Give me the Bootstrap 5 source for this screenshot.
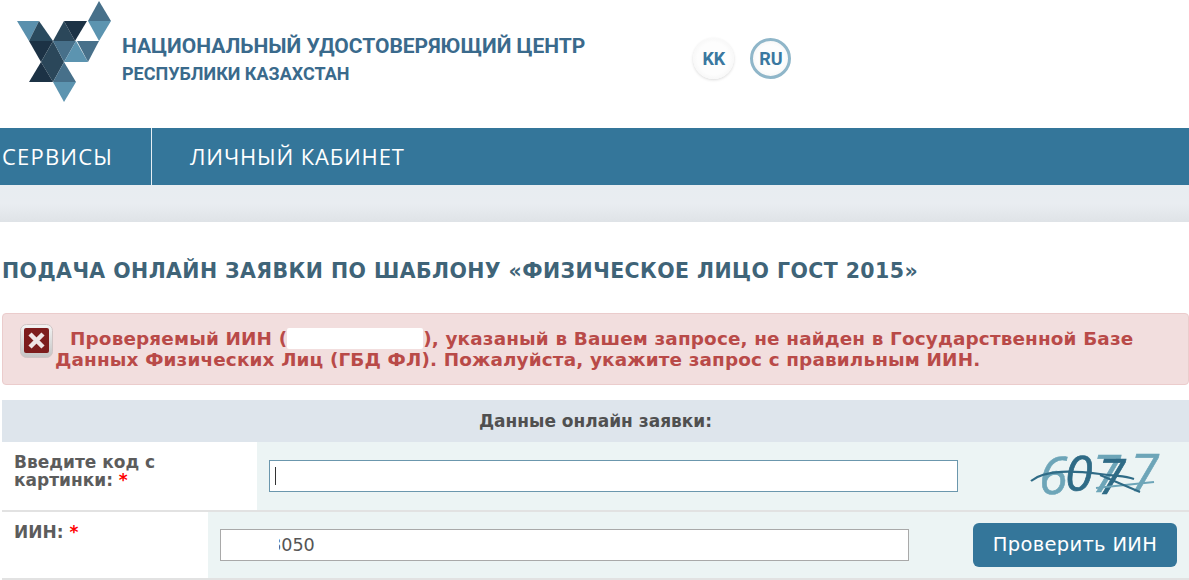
<!DOCTYPE html>
<html lang="ru"><head><meta charset="utf-8">
<link rel="stylesheet" href="https://cdn.jsdelivr.net/npm/bootstrap@5.3.0/dist/css/bootstrap.min.css">
<style>
body{font-family:"DejaVu Sans",sans-serif;background:#fff;overflow:hidden;width:1189px;height:580px}
.hdr{height:128px}
.logo-box{width:122px;height:128px;flex:none}
.brand1{font:700 21px/25px Roboto,sans-serif;color:#3a6a8c;margin-top:34px;white-space:nowrap}
.brand2{font:700 18px/22px Roboto,sans-serif;color:#3a6a8c;margin-top:4px;white-space:nowrap}
.langs{margin-left:108px;margin-top:38px;gap:16px}
.lng{width:41px;height:41px;border-radius:50%;background:radial-gradient(#fdfdfd 55%,#eee);font:700 18px/41px Roboto,sans-serif;color:#3a78a0;text-align:center;box-shadow:0 1px 3px rgba(0,0,0,.15)}
.lng-on{border:3px solid #8fb6c9;line-height:35px;box-shadow:none}
.mainnav{height:57px;background:#34769a}
.mainnav a{font:400 22px/57px "Open Sans",sans-serif;color:#fff;text-decoration:none;white-space:nowrap}
.nav-a{width:152px;padding-left:2px;border-right:1px solid #e6eff4;letter-spacing:1.2px}
.nav-b{padding-left:38px;letter-spacing:.85px}
.band{height:37px;background:linear-gradient(#e8edf1,#e9edf1 50%,#dfe3e7)}
.ttl{font:700 20.5px/24px "DejaVu Sans",sans-serif;color:#3f6478;margin:37px 0 30px 2px;white-space:nowrap;letter-spacing:.42px}
.errbox{margin-left:2px;height:72px;background:#f2dede;border:1px solid #ebcccc;border-radius:4px;color:#b94a48;font:700 18.4px/21px "DejaVu Sans",sans-serif;letter-spacing:.15px;padding:14px 0 0 52px;white-space:nowrap;position:relative}
.errico{position:absolute;left:17px;top:10px}
.hide{display:inline-block;width:136px;height:21px;background:#fff;vertical-align:top;border-radius:2px}
.first{padding-left:15px}
.formhead{margin:15px 0 0 2px;height:42px;background:#dee5ec;text-align:center;font:700 17px/42px "DejaVu Sans",sans-serif;color:#505050}
.frow{margin-left:2px;border-bottom:2px solid #e2e2e2}
.r1{height:70px}.r2{height:68px}
.lbl{font:700 17px/18px "DejaVu Sans",sans-serif;color:#5c5c5c;padding:11px 40px 0 12px}
.l1{width:255px;flex:none}.l2{width:206px;flex:none}
.fld{background:#ecf4f4;padding:0 0 0 12px;flex:1}
.inp1,.inp2{display:block;height:32px;background:#fff;padding:0 5px;flex:none}
.inp1{width:689px;margin-top:18px;border:1px solid #6b97ad}
.cur{display:block;width:1px;height:18px;background:#333;margin-top:6px}
.inp2{width:689px;margin-top:17px;border:1px solid #a9a9a9;font:400 17.6px/30px "DejaVu Sans",sans-serif;color:#555;padding-left:49px;position:relative}
.mask{position:absolute;left:0;top:0;width:58px;height:30px;background:#fff}
.capt{margin-left:72px;margin-top:9px;flex:none;overflow:visible}
.digl{font:italic 400 52px "Open Sans",sans-serif;fill:#6da5b8;stroke:#6da5b8;stroke-width:.6}
.digd{font:italic 400 50px "Open Sans",sans-serif;fill:#2f6b86;stroke:#2f6b86;stroke-width:.7}
.go{width:204px;height:44px;margin:11px 0 0 64px;background:#34769a;color:#fff;font:400 19.5px/44px "DejaVu Sans",sans-serif;letter-spacing:.3px;border-radius:6px;border:0;padding:0;text-align:center;white-space:nowrap;flex:none}
.go:hover{background:#34769a;color:#fff}
.req{color:#f00}
</style></head><body>
<div class="hdr d-flex">
<div class="logo-box"><svg width="122" height="128" viewBox="0 0 122 128">
<polygon points="17,21 39,21 29,41" fill="#5a90ad"/><polygon points="39,21 53,41 29,41" fill="#2a4a5e"/><polygon points="29,41 53,41 41,62" fill="#1c3245"/><polygon points="53,41 41,62 64,62" fill="#2b475a"/>
<polygon points="53,41 64,21 75,41" fill="#2b475a"/><polygon points="64,21 87,21 75,41" fill="#1c3245"/><polygon points="53,41 76,41 64,62" fill="#47708a"/><polygon points="64,62 76,41 88,62" fill="#5c94b0"/><polygon points="77,41 99,41 88,62" fill="#47708a"/>
<polygon points="88,21 111,21 99,41" fill="#5c94b0"/><polygon points="88,21 99,1 111,21" fill="#47708a"/>
<polygon points="41,62 64,62 53,82" fill="#2b475a"/><polygon points="41,62 53,82 29,82" fill="#1c3245"/><polygon points="64,62 53,82 76,82" fill="#47708a"/><polygon points="53,82 76,82 64,102" fill="#5c94b0"/>
</svg></div>
<div><div class="brand1">НАЦИОНАЛЬНЫЙ УДОСТОВЕРЯЮЩИЙ ЦЕНТР</div><div class="brand2">РЕСПУБЛИКИ КАЗАХСТАН</div></div>
<div class="langs d-flex align-items-start"><div class="lng">KK</div><div class="lng lng-on">RU</div></div>
</div>
<div class="mainnav d-flex"><a class="nav-a" href="#">СЕРВИСЫ</a><a class="nav-b" href="#">ЛИЧНЫЙ КАБИНЕТ</a></div>
<div class="band"></div>
<h1 class="ttl">ПОДАЧА ОНЛАЙН ЗАЯВКИ ПО ШАБЛОНУ «ФИЗИЧЕСКОЕ ЛИЦО ГОСТ 2015»</h1>
<div class="errbox">
<svg class="errico" width="33" height="34" viewBox="0 0 33 34"><defs><linearGradient id="sil" x1="0" y1="0" x2="0" y2="1"><stop offset="0" stop-color="#f4f4f4"/><stop offset="1" stop-color="#c4c4c4"/></linearGradient></defs><rect x=".5" y=".5" width="32" height="33" rx="6" fill="url(#sil)" stroke="#d0c4c4"/><rect x="4" y="4" width="25" height="25" rx="2" fill="#7d1d1d"/><path d="M10 10L23 23M23 10L10 23" stroke="#efe4e4" stroke-width="4.5"/></svg>
<div class="first">Проверяемый ИИН (<span class="hide"></span>), указаный в Вашем запросе, не найден в Государственной Базе</div>
<div>Данных Физических Лиц (ГБД ФЛ). Пожалуйста, укажите запрос с правильным ИИН.</div>
</div>
<div class="formhead">Данные онлайн заявки:</div>
<div class="frow r1 d-flex"><div class="lbl l1">Введите код с картинки: <span class="req">*</span></div>
<div class="fld d-flex"><div class="inp1"><span class="cur"></span></div>
<svg class="capt" width="145" height="58" viewBox="0 0 145 58" fill="none"><text x="9" y="43" class="digl">6</text><text x="62" y="41" class="digl">7</text><text x="100" y="40" class="digl">7</text><text x="35" y="40" class="digd">0</text><text x="68" y="43" class="digd">7</text><path d="M1 30C15 18 45 20 70 23S95 25 104 28" stroke="#2f6b86" stroke-width="2.2"/><path d="M66 37L124 31" stroke="#6da5b8" stroke-width="2.2"/><path d="M70 24L110 41" stroke="#2f6b86" stroke-width="2"/></svg></div></div>
<div class="frow r2 d-flex"><div class="lbl l2">ИИН: <span class="req">*</span></div>
<div class="fld d-flex"><div class="inp2">8050<span class="mask"></span></div><button class="go btn">Проверить ИИН</button></div></div>
</body></html>
